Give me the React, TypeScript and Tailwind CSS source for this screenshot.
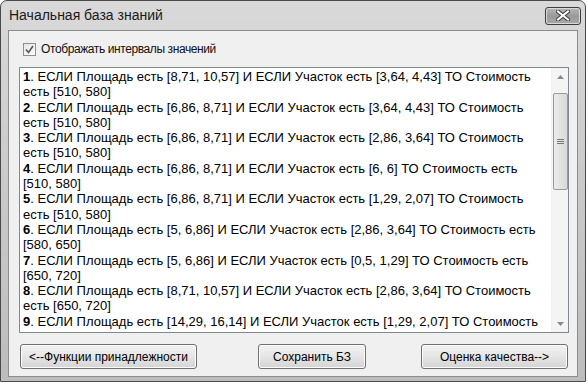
const rules: [string, string, string][] = [
  ['1', '. ЕСЛИ Площадь есть [8,71, 10,57] И ЕСЛИ Участок есть [3,64, 4,43] ТО Стоимость', 'есть [510, 580]'],
  ['2', '. ЕСЛИ Площадь есть [6,86, 8,71] И ЕСЛИ Участок есть [3,64, 4,43] ТО Стоимость', 'есть [510, 580]'],
  ['3', '. ЕСЛИ Площадь есть [6,86, 8,71] И ЕСЛИ Участок есть [2,86, 3,64] ТО Стоимость', 'есть [510, 580]'],
  ['4', '. ЕСЛИ Площадь есть [6,86, 8,71] И ЕСЛИ Участок есть [6, 6] ТО Стоимость есть', '[510, 580]'],
  ['5', '. ЕСЛИ Площадь есть [6,86, 8,71] И ЕСЛИ Участок есть [1,29, 2,07] ТО Стоимость', 'есть [510, 580]'],
  ['6', '. ЕСЛИ Площадь есть [5, 6,86] И ЕСЛИ Участок есть [2,86, 3,64] ТО Стоимость есть', '[580, 650]'],
  ['7', '. ЕСЛИ Площадь есть [5, 6,86] И ЕСЛИ Участок есть [0,5, 1,29] ТО Стоимость есть', '[650, 720]'],
  ['8', '. ЕСЛИ Площадь есть [8,71, 10,57] И ЕСЛИ Участок есть [2,86, 3,64] ТО Стоимость', 'есть [650, 720]'],
  ['9', '. ЕСЛИ Площадь есть [14,29, 16,14] И ЕСЛИ Участок есть [1,29, 2,07] ТО Стоимость', ''],
]

function Btn({ label, className }: { label: string; className: string }) {
  return (
    <button
      className={`h-[25px] rounded-[3px] border border-[#707070] bg-gradient-to-b from-[#f2f2f2] via-[#e6e6e6] to-[#d4d4d4] text-[12px] text-black shadow-[inset_0_0_0_1px_#fcfcfc] ${className}`}
    >
      {label}
    </button>
  )
}

export default function App() {
  return (
    <div className="w-[588px] h-[385px] bg-white font-['Liberation_Sans',sans-serif]">
      <div className="w-[586px] h-[382px] rounded-t-[7px] border border-[#4a4a4a] bg-gradient-to-b from-[#d9d9d9] via-[#c9c9c9] to-[#bdbdbd] flex flex-col">
        {/* Title bar */}
        <div className="h-[29px] flex items-center pl-[8px] pr-[4px]">
          <span className="text-[14px] text-[#1a1a1a]">Начальная база знаний</span>
          <div className="ml-auto w-[36px] h-[18px] rounded-[3px] border border-[#3d3d3d] bg-gradient-to-b from-[#b8b8b8] via-[#9a9a9a] to-[#a8a8a8] flex items-center justify-center shadow-[inset_0_0_0_1px_#d8d8d8]">
            <svg width="14" height="11" viewBox="0 0 14 11">
              <path d="M2 1.5 L12 9.5 M12 1.5 L2 9.5" stroke="#3a3a3a" strokeWidth="4" strokeLinecap="square" />
              <path d="M2 1.5 L12 9.5 M12 1.5 L2 9.5" stroke="#ffffff" strokeWidth="2" strokeLinecap="square" />
            </svg>
          </div>
        </div>

        {/* Client area */}
        <div className="mx-[7px] h-[347px] border border-[#8c8c8c] bg-[#f0f0f0] flex flex-col">
          <label className="flex items-center mt-[11px] ml-[14px] h-[14px]">
            <span className="w-[13px] h-[13px] border border-[#8f8f8f] bg-gradient-to-br from-[#e8e8e8] to-[#fafafa] flex items-center justify-center">
              <svg width="9" height="9" viewBox="0 0 9 9">
                <path d="M1 4.5 L3.5 7.5 L8 1" fill="none" stroke="#555" strokeWidth="1.6" />
              </svg>
            </span>
            <span className="ml-[5px] text-[12px] tracking-[-0.4px] text-[#111]">Отображать интервалы значений</span>
          </label>

          {/* List */}
          <div className="mt-[11px] ml-[10px] w-[550px] h-[266px] border border-[#828790] bg-white flex overflow-hidden">
            <div className="flex-1 pl-[3px] pt-[1px] text-[13px] leading-[15.3px] text-black overflow-hidden">
              {rules.map(([n, a, b]) => (
                <div key={n}>
                  <div className="whitespace-nowrap">
                    <b>{n}</b>
                    {a}
                  </div>
                  {b && <div className="whitespace-nowrap">{b}</div>}
                </div>
              ))}
            </div>
            <div className="w-[17px] bg-[#f4f4f4] flex flex-col items-center border-l border-[#f0f0f0]">
              <div className="h-[17px] flex items-center justify-center">
                <svg width="7" height="4" viewBox="0 0 7 4">
                  <path d="M0 4 L3.5 0 L7 4 Z" fill="#8a8a8a" />
                </svg>
              </div>
              <div className="mt-[8px] w-[15px] h-[97px] rounded-[2px] border border-[#9a9a9a] bg-gradient-to-r from-[#ececec] to-[#d8d8d8] flex items-center justify-center">
                <svg width="7" height="6" viewBox="0 0 7 6">
                  <path d="M0 0.5 H7 M0 2.5 H7 M0 4.5 H7" stroke="#777" strokeWidth="1" />
                </svg>
              </div>
              <div className="mt-auto h-[17px] flex items-center justify-center">
                <svg width="7" height="4" viewBox="0 0 7 4">
                  <path d="M0 0 L3.5 4 L7 0 Z" fill="#8a8a8a" />
                </svg>
              </div>
            </div>
          </div>

          {/* Buttons */}
          <div className="mt-[11px] flex">
            <Btn label="<--Функции принадлежности" className="ml-[11px] w-[177px]" />
            <Btn label="Сохранить БЗ" className="ml-[61px] w-[108px]" />
            <Btn label="Оценка качества-->" className="ml-[55px] w-[147px]" />
          </div>
        </div>
      </div>
    </div>
  )
}
